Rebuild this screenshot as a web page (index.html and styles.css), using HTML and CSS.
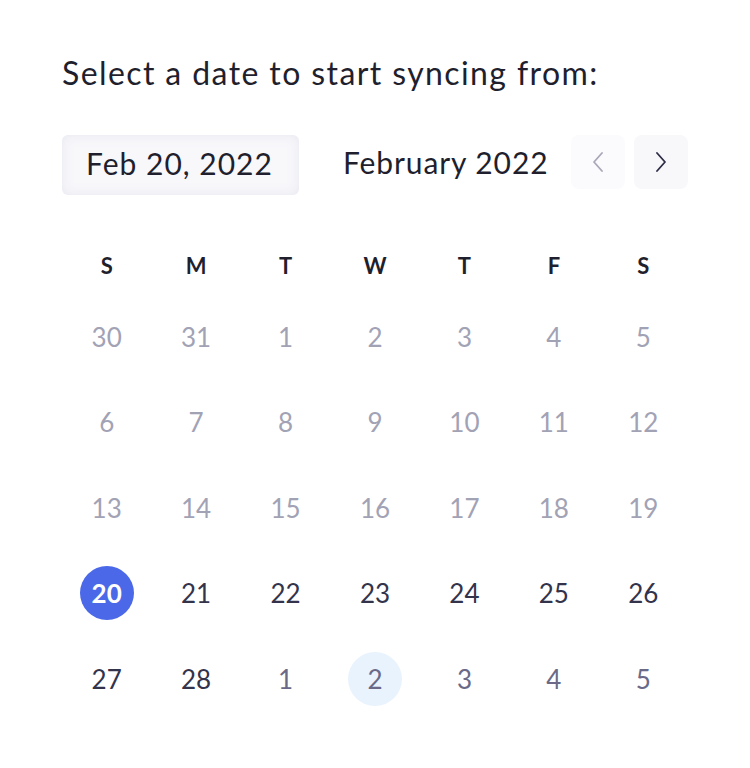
FILE: index.html
```html
<!DOCTYPE html>
<html lang="en">
<head>
    <meta charset="UTF-8">
    <meta name="viewport" content="width=device-width, initial-scale=1.0">
    <title>Select a date</title>
    <link rel="stylesheet" href="styles.css">
</head>
<body>
    <div class="picker">
        <h1 class="title">Select a date to start syncing from:</h1>

        <div class="toolbar">
            <div class="date-input">Feb 20, 2022</div>
            <div class="month-label">February 2022</div>
            <div class="nav">
                <button class="nav-btn prev" aria-label="Previous month">
                    <svg width="12" height="20" viewBox="0 0 12 20"><path d="M10 1 L2 10 L10 19" fill="none" stroke="currentColor" stroke-width="1.8" stroke-linecap="round" stroke-linejoin="round"/></svg>
                </button>
                <button class="nav-btn next" aria-label="Next month">
                    <svg width="12" height="20" viewBox="0 0 12 20"><path d="M2 1 L10 10 L2 19" fill="none" stroke="currentColor" stroke-width="1.8" stroke-linecap="round" stroke-linejoin="round"/></svg>
                </button>
            </div>
        </div>

        <div class="calendar">
            <div class="weekday">S</div>
            <div class="weekday">M</div>
            <div class="weekday">T</div>
            <div class="weekday">W</div>
            <div class="weekday">T</div>
            <div class="weekday">F</div>
            <div class="weekday">S</div>

            <div class="day past"><span>30</span></div>
            <div class="day past"><span>31</span></div>
            <div class="day past"><span>1</span></div>
            <div class="day past"><span>2</span></div>
            <div class="day past"><span>3</span></div>
            <div class="day past"><span>4</span></div>
            <div class="day past"><span>5</span></div>

            <div class="day past"><span>6</span></div>
            <div class="day past"><span>7</span></div>
            <div class="day past"><span>8</span></div>
            <div class="day past"><span>9</span></div>
            <div class="day past"><span>10</span></div>
            <div class="day past"><span>11</span></div>
            <div class="day past"><span>12</span></div>

            <div class="day past"><span>13</span></div>
            <div class="day past"><span>14</span></div>
            <div class="day past"><span>15</span></div>
            <div class="day past"><span>16</span></div>
            <div class="day past"><span>17</span></div>
            <div class="day past"><span>18</span></div>
            <div class="day past"><span>19</span></div>

            <div class="day selected"><span>20</span></div>
            <div class="day"><span>21</span></div>
            <div class="day"><span>22</span></div>
            <div class="day"><span>23</span></div>
            <div class="day"><span>24</span></div>
            <div class="day"><span>25</span></div>
            <div class="day"><span>26</span></div>

            <div class="day"><span>27</span></div>
            <div class="day"><span>28</span></div>
            <div class="day outside"><span>1</span></div>
            <div class="day outside today"><span>2</span></div>
            <div class="day outside"><span>3</span></div>
            <div class="day outside"><span>4</span></div>
            <div class="day outside"><span>5</span></div>
        </div>
    </div>
</body>
</html>
```

FILE: styles.css
```css
body {
    margin: 0;
    background: #ffffff;
    font-family: 'Lato', 'Noto Sans', sans-serif;
    color: #1f1f2e;
}

.picker {
    width: 626px;
    padding: 53px 62px 0;
}

.title {
    margin: 0;
    font-size: 32px;
    line-height: 40px;
    font-weight: 400;
    letter-spacing: 1.4px;
    color: #1f1f2e;
}

.toolbar {
    display: flex;
    align-items: flex-start;
    margin-top: 42px;
}

.date-input {
    width: 213px;
    height: 60px;
    padding-left: 24px;
    border-radius: 6px;
    background: #f8f8fb;
    box-shadow: inset 0 0 12px rgba(210, 210, 228, 0.45);
    font-size: 30px;
    line-height: 56px;
    letter-spacing: 1px;
    color: #1f1f2e;
}

.month-label {
    margin-left: 44px;
    font-size: 30px;
    line-height: 54px;
    letter-spacing: 0.9px;
    color: #1f1f2e;
}

.nav {
    display: flex;
    gap: 9px;
    margin-left: auto;
}

.nav-btn {
    width: 54px;
    height: 54px;
    padding: 0;
    border: none;
    border-radius: 8px;
    background: #f8f8fb;
    display: flex;
    align-items: center;
    justify-content: center;
    cursor: pointer;
}

.nav-btn.prev {
    color: #a8a8b8;
    background: #fbfbfd;
}

.nav-btn.next {
    color: #2c2c46;
}

.calendar {
    display: grid;
    grid-template-columns: repeat(7, 1fr);
    grid-auto-rows: 85.5px;
    grid-template-rows: 58px;
    margin-top: 41px;
}

.weekday {
    display: flex;
    align-items: center;
    justify-content: center;
    font-size: 22px;
    font-weight: 700;
    color: #1f1f2e;
}

.day {
    display: flex;
    align-items: center;
    justify-content: center;
    font-size: 26px;
    color: #33334b;
}

.day span {
    width: 54px;
    height: 54px;
    border-radius: 50%;
    display: flex;
    align-items: center;
    justify-content: center;
}

.day.past {
    color: #a2a2b5;
}

.day.outside {
    color: #6a6a88;
}

.day.today span {
    background: #e9f3fd;
}

.day.selected span {
    background: #4a68e8;
    color: #ffffff;
    font-weight: 700;
}
```
